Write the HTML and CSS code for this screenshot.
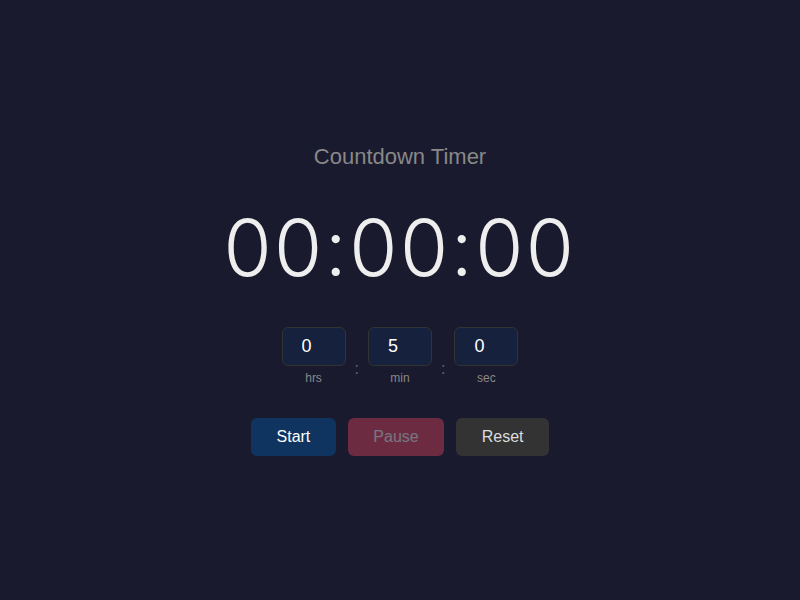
FILE: index.html
```html
<!DOCTYPE html>
<html>
<head>
<meta charset="utf-8">
<link rel="stylesheet" href="styles.css">
</head>
<body>
<div class="app">
  <h1 class="title">Countdown Timer</h1>
  <div class="display">00:00:00</div>
  <div class="inputs">
    <div class="field"><input class="num" type="number" value="0"><span class="label">hrs</span></div>
    <span class="sep">:</span>
    <div class="field"><input class="num" type="number" value="5"><span class="label">min</span></div>
    <span class="sep">:</span>
    <div class="field"><input class="num" type="number" value="0"><span class="label">sec</span></div>
  </div>
  <div class="buttons">
    <button class="btn start">Start</button>
    <button class="btn pause" disabled>Pause</button>
    <button class="btn reset">Reset</button>
  </div>
</div>
</body>
</html>
```
FILE: styles.css
```css
html, body {
  margin: 0;
  padding: 0;
  background: #1a1a2e;
  font-family: "Liberation Sans", Arial, sans-serif;
}
.app {
  min-height: 100vh;
  display: flex;
  flex-direction: column;
  align-items: center;
  justify-content: center;
}
.title {
  margin: 0;
  font-size: 22px;
  font-weight: 400;
  color: #888;
}
.display {
  margin-top: 31px;
  font-family: Inter, "Liberation Sans", sans-serif;
  font-feature-settings: "calt" 0;
  font-size: 78px;
  font-weight: 300;
  letter-spacing: 2.5px;
  color: #eee;
  line-height: 1.2;
}
.inputs {
  margin-top: 32px;
  display: flex;
  align-items: center;
  gap: 9px;
}
.field {
  display: flex;
  flex-direction: column;
  align-items: center;
  gap: 5px;
}
.num {
  width: 64px;
  height: 39px;
  box-sizing: border-box;
  background: #16213e;
  border: 1px solid #333;
  border-radius: 6px;
  color: #fff;
  font-family: "Liberation Sans", Arial, sans-serif;
  font-size: 18px;
  padding: 0 0 0 19px;
  outline: none;
  -moz-appearance: textfield;
}
.num::-webkit-outer-spin-button,
.num::-webkit-inner-spin-button {
  -webkit-appearance: none;
  margin: 0;
}
.label {
  font-size: 12px;
  color: #888;
}
.sep {
  color: #666;
  font-size: 16px;
  padding-top: 26px;
}
.buttons {
  margin-top: 33px;
  display: flex;
  gap: 12px;
}
.btn {
  font-family: "Liberation Sans", Arial, sans-serif;
  font-size: 16px;
  padding: 0 26px;
  height: 38px;
  border: none;
  border-radius: 6px;
  color: #fff;
  cursor: pointer;
}
.start { background: #0f3460; }
.pause { background: #e94560; opacity: 0.4; padding: 0 25px; }
.reset { background: #333; color: #ddd; }
```
